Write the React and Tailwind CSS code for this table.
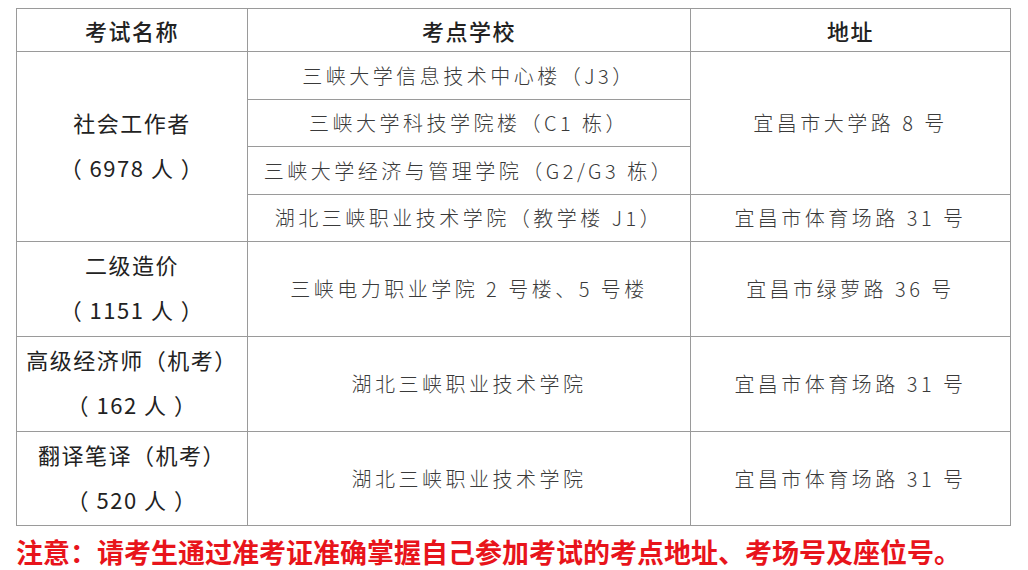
const sans = "font-['Noto_Sans_CJK_SC','Noto_Sans',sans-serif]";

function NameCell({ name, count, rowSpan }) {
  return (
    <td rowSpan={rowSpan} className="border border-[#9a9a9a] text-center align-middle text-[22px] text-[#222] tracking-[1.5px] leading-[45px]">
      <div className="-mt-1">{name}</div>
      <div>（ {count} 人 ）</div>
    </td>
  );
}

function Cell({ children, rowSpan, h }) {
  return (
    <td rowSpan={rowSpan} className={`border border-[#9a9a9a] text-center align-middle text-[20px] font-light text-[#3a3a3a] tracking-[3.5px] ${h || ""}`}>
      {children}
    </td>
  );
}

export default function App() {
  return (
    <div className={`w-[1028px] h-[570px] bg-white pt-2 px-4 ${sans}`}>
      <table className="w-[994px] table-fixed border-collapse">
        <colgroup>
          <col className="w-[231px]" />
          <col className="w-[443px]" />
          <col className="w-[320px]" />
        </colgroup>
        <tbody>
          <tr className="h-[43px]">
            <th className="border border-[#9a9a9a] text-[22px] font-medium text-[#222] tracking-[1.5px]">考试名称</th>
            <th className="border border-[#9a9a9a] text-[22px] font-medium text-[#222] tracking-[1.5px]">考点学校</th>
            <th className="border border-[#9a9a9a] text-[22px] font-medium text-[#222] tracking-[1.5px]">地址</th>
          </tr>
          <tr className="h-[48px]">
            <NameCell name="社会工作者" count="6978" rowSpan={4} />
            <Cell>三峡大学信息技术中心楼（J3）</Cell>
            <Cell rowSpan={3}>宜昌市大学路 8 号</Cell>
          </tr>
          <tr className="h-[47px]">
            <Cell>三峡大学科技学院楼（C1 栋）</Cell>
          </tr>
          <tr className="h-[48px]">
            <Cell>三峡大学经济与管理学院（G2/G3 栋）</Cell>
          </tr>
          <tr className="h-[47px]">
            <Cell>湖北三峡职业技术学院（教学楼 J1）</Cell>
            <Cell>宜昌市体育场路 31 号</Cell>
          </tr>
          <tr className="h-[95px]">
            <NameCell name="二级造价" count="1151" />
            <Cell>三峡电力职业学院 2 号楼、5 号楼</Cell>
            <Cell>宜昌市绿萝路 36 号</Cell>
          </tr>
          <tr className="h-[95px]">
            <NameCell name="高级经济师（机考）" count="162" />
            <Cell>湖北三峡职业技术学院</Cell>
            <Cell>宜昌市体育场路 31 号</Cell>
          </tr>
          <tr className="h-[94px]">
            <NameCell name="翻译笔译（机考）" count="520" />
            <Cell>湖北三峡职业技术学院</Cell>
            <Cell>宜昌市体育场路 31 号</Cell>
          </tr>
        </tbody>
      </table>
      <p className="mt-[10px] text-[27px] font-bold text-[#e8141b] leading-[32px]">
        注意：请考生通过准考证准确掌握自己参加考试的考点地址、考场号及座位号。
      </p>
    </div>
  );
}
